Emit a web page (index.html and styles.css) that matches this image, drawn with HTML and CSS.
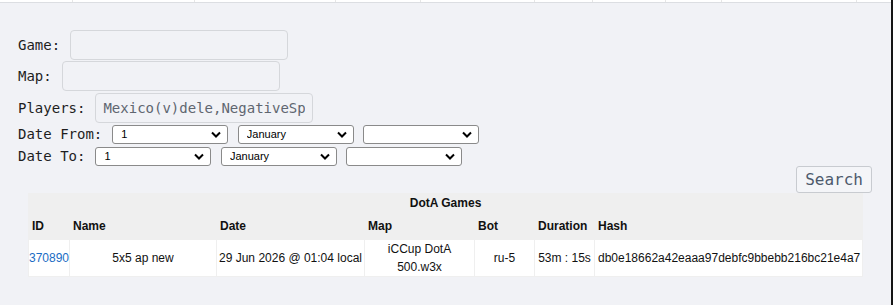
FILE: index.html
```html
<!DOCTYPE html>
<html lang="en">
<head>
    <meta charset="UTF-8">
    <meta name="viewport" content="width=device-width, initial-scale=1.0">
    <title>DotA Games Search</title>
    <link rel="stylesheet" href="styles.css">
</head>
<body>
    <div class="frame">
        <div class="page">
            <!-- bottom edge of the nav bar above -->
            <div class="topbar">
                <span class="seg s1"></span>
                <span class="seg s2"></span>
                <span class="seg s3"></span>
                <span class="seg s4"></span>
                <span class="seg s5"></span>
                <span class="seg s6"></span>
                <span class="seg s7"></span>
                <span class="seg s8"></span>
                <span class="seg s9"></span>
            </div>

            <form class="search-form">
                <div class="row field-row game-row">
                    <label>Game:</label>
                    <input type="text" class="text-input">
                </div>
                <div class="row field-row map-row">
                    <label>Map:</label>
                    <input type="text" class="text-input">
                </div>
                <div class="row field-row">
                    <label>Players:</label>
                    <input type="text" class="text-input" value="Mexico(v)dele,NegativeSpace">
                </div>
                <div class="row date-row">
                    <label>Date From:</label>
                    <select class="date-select"><option>1</option></select>
                    <select class="date-select"><option>January</option></select>
                    <select class="date-select"><option></option></select>
                </div>
                <div class="row date-row">
                    <label>Date To:</label>
                    <select class="date-select"><option>1</option></select>
                    <select class="date-select"><option>January</option></select>
                    <select class="date-select"><option></option></select>
                </div>
                <div class="button-row">
                    <button type="button" class="search-btn">Search</button>
                </div>
            </form>

            <table class="games">
                <colgroup>
                    <col class="c-id">
                    <col class="c-name">
                    <col class="c-date">
                    <col class="c-map">
                    <col class="c-bot">
                    <col class="c-dur">
                    <col class="c-hash">
                </colgroup>
                <tr class="caption-row">
                    <th colspan="7">DotA Games</th>
                </tr>
                <tr class="head-row">
                    <th>ID</th>
                    <th>Name</th>
                    <th>Date</th>
                    <th>Map</th>
                    <th>Bot</th>
                    <th>Duration</th>
                    <th>Hash</th>
                </tr>
                <tr class="game-row-data">
                    <td><a href="#">370890</a></td>
                    <td>5x5 ap new</td>
                    <td>29 Jun 2026 @ 01:04 local</td>
                    <td>iCCup DotA 500.w3x</td>
                    <td>ru-5</td>
                    <td>53m : 15s</td>
                    <td class="hash">db0e18662a42eaaa97debfc9bbebb216bc21e4a7</td>
                </tr>
            </table>
        </div>
        <div class="edge"></div>
    </div>
</body>
</html>
```

FILE: styles.css
```css
body {
    margin: 0;
    background-color: #f1f2f6;
    font-family: "Liberation Sans", Arial, sans-serif;
}
.frame {
    display: flex;
    height: 305px;
    overflow: hidden;
}
.page {
    flex: 1;
}
.edge {
    width: 2px;
    background: #151515;
}
.topbar {
    display: flex;
    height: 2px;
    background: white;
    border-bottom: 1px solid #dcdee2;
}
.seg {
    border-right: 1px solid #e6e6e6;
}
.s1 { width: 72px; }
.s2 { width: 121px; }
.s3 { width: 140px; }
.s4 { width: 84px; }
.s5 { width: 113px; }
.s6 { width: 57px; }
.s7 { width: 72px; }
.s8 { width: 55px; }
.s9 { width: 134px; }

.search-form {
    padding: 27px 19px 0 18px;
    font-family: "DejaVu Sans Mono", monospace;
    font-size: 14px;
    color: #1e1e1e;
}
.row {
    display: flex;
    align-items: center;
    gap: 10px;
}
.field-row {
    height: 30px;
}
.game-row {
    margin-bottom: 1px;
}
.map-row {
    margin-bottom: 2px;
}
.text-input {
    box-sizing: border-box;
    width: 218px;
    height: 30px;
    margin: 0;
    padding: 0 7px;
    border: 1px solid #d5d7db;
    border-radius: 4px;
    background: #f1f2f6;
    font-family: "DejaVu Sans Mono", monospace;
    font-size: 14px;
    color: #5f6670;
    outline: none;
}
.date-row {
    height: 22px;
    gap: 0;
}
.date-row label {
    margin-right: 10px;
}
.date-select {
    box-sizing: border-box;
    width: 116px;
    height: 19px;
    margin: 0 9.5px 0 0;
    padding: 0 0 0 8px;
    appearance: none;
    -webkit-appearance: none;
    font-family: "Liberation Sans", Arial, sans-serif;
    font-size: 11px;
    color: #000;
    background: white url("data:image/svg+xml;utf8,<svg xmlns='http://www.w3.org/2000/svg' width='10' height='7' viewBox='0 0 10 7'><path d='M1 1.5 L5 5.5 L9 1.5' fill='none' stroke='black' stroke-width='2'/></svg>") no-repeat right 6px center;
    border: 1px solid #8a8a8a;
    border-radius: 3px;
}
.button-row {
    display: flex;
    justify-content: flex-end;
    margin-top: -1px;
}
.search-btn {
    width: 76px;
    height: 27px;
    padding: 0;
    font-family: "DejaVu Sans Mono", monospace;
    font-size: 16px;
    color: #4d5a6c;
    background: #f4f5f8;
    border: 1px solid #c8cbd0;
    border-radius: 3px;
}

.games {
    margin: 0 28px 0 28px;
    width: 835px;
    table-layout: fixed;
    border-collapse: separate;
    border-spacing: 1px;
    background: #efefef;
    font-size: 12px;
    color: #111;
}
.c-id { width: 40px; }
.c-name { width: 146px; }
.c-date { width: 147px; }
.c-map { width: 109px; }
.c-bot { width: 59px; }
.c-dur { width: 59px; }
.c-hash { width: 267px; }
.caption-row th {
    height: 17px;
    padding: 0;
    text-align: center;
}
.head-row th {
    height: 27px;
    padding: 0 3px;
    text-align: left;
}
.game-row-data td {
    height: 34px;
    padding: 0;
    background: white;
    text-align: center;
    line-height: 18px;
    white-space: normal;
}
.game-row-data td.hash {
    text-align: left;
    padding-left: 3px;
    white-space: nowrap;
}
.games a {
    color: #1a6cc4;
    text-decoration: none;
}
```
